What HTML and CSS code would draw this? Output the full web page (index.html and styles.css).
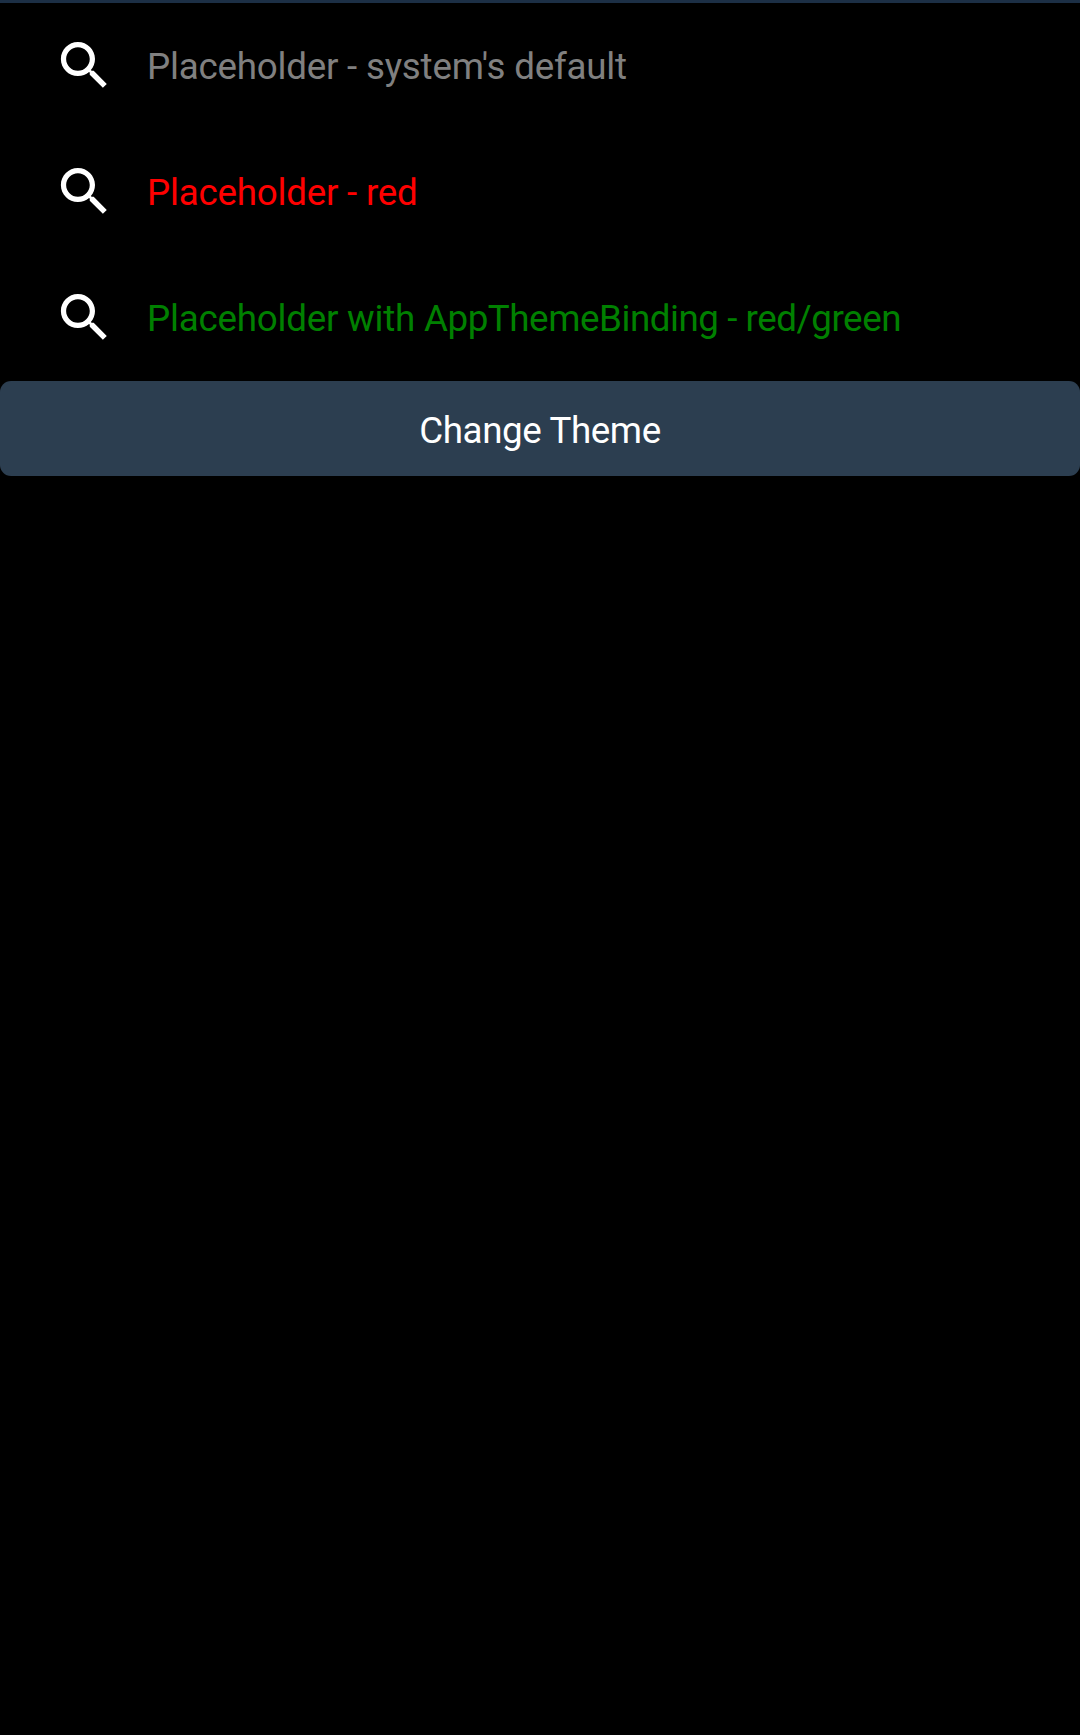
FILE: index.html
```html
<!DOCTYPE html>
<html lang="en">
<head>
<meta charset="utf-8">
<title>Search bars</title>
<link rel="stylesheet" href="styles.css">
</head>
<body>
<main class="page">
  <div class="search-bar">
    <svg class="icon" viewBox="0 0 24 24"><path d="M15.5 14h-.79l-.28-.27C15.41 12.59 16 11.11 16 9.5 16 5.91 13.09 3 9.5 3S3 5.91 3 9.5 5.91 16 9.5 16c1.61 0 3.09-.59 4.23-1.57l.27.28v.79l5 4.99L20.49 19l-4.99-5zm-6 0C7.01 14 5 11.99 5 9.5S7.01 5 9.5 5 14 7.01 14 9.5 11.99 14 9.5 14z"/></svg>
    <span class="placeholder placeholder-default">Placeholder - system's default</span>
  </div>
  <div class="search-bar">
    <svg class="icon" viewBox="0 0 24 24"><path d="M15.5 14h-.79l-.28-.27C15.41 12.59 16 11.11 16 9.5 16 5.91 13.09 3 9.5 3S3 5.91 3 9.5 5.91 16 9.5 16c1.61 0 3.09-.59 4.23-1.57l.27.28v.79l5 4.99L20.49 19l-4.99-5zm-6 0C7.01 14 5 11.99 5 9.5S7.01 5 9.5 5 14 7.01 14 9.5 11.99 14 9.5 14z"/></svg>
    <span class="placeholder placeholder-red">Placeholder - red</span>
  </div>
  <div class="search-bar">
    <svg class="icon" viewBox="0 0 24 24"><path d="M15.5 14h-.79l-.28-.27C15.41 12.59 16 11.11 16 9.5 16 5.91 13.09 3 9.5 3S3 5.91 3 9.5 5.91 16 9.5 16c1.61 0 3.09-.59 4.23-1.57l.27.28v.79l5 4.99L20.49 19l-4.99-5zm-6 0C7.01 14 5 11.99 5 9.5S7.01 5 9.5 5 14 7.01 14 9.5 11.99 14 9.5 14z"/></svg>
    <span class="placeholder placeholder-green">Placeholder with <span class="tight">AppThemeBinding - red/green</span></span>
  </div>
  <button class="theme-button">Change Theme</button>
</main>
</body>
</html>
```
FILE: styles.css
```css
body {
  margin: 0;
  background: #000;
  font-family: Roboto, sans-serif;
}

.page {
  box-sizing: border-box;
  min-height: 1735px;
  border-top: 3px solid #1c2f45;
}

.search-bar {
  display: flex;
  align-items: center;
  box-sizing: border-box;
  height: 126px;
  padding-left: 53px;
}

.icon {
  flex: none;
  width: 63px;
  height: 63px;
  margin: 0 31px 2px 0;
  fill: #fff;
}

.placeholder {
  padding-top: 2px;
  font-size: 36.75px;
  line-height: 44px;
  letter-spacing: -0.22px;
  white-space: nowrap;
}

.tight { letter-spacing: -0.45px; }

.placeholder-default { color: #808080; }
.placeholder-red { color: #f00; }
.placeholder-green { color: #008000; }

.theme-button {
  display: block;
  width: 100%;
  height: 95px;
  padding: 5px 0 0;
  border: 0;
  border-radius: 11px;
  background: #2c3e50;
  color: #fff;
  font: 36.75px/44px Roboto, sans-serif;
  letter-spacing: -0.4px;
}
```
